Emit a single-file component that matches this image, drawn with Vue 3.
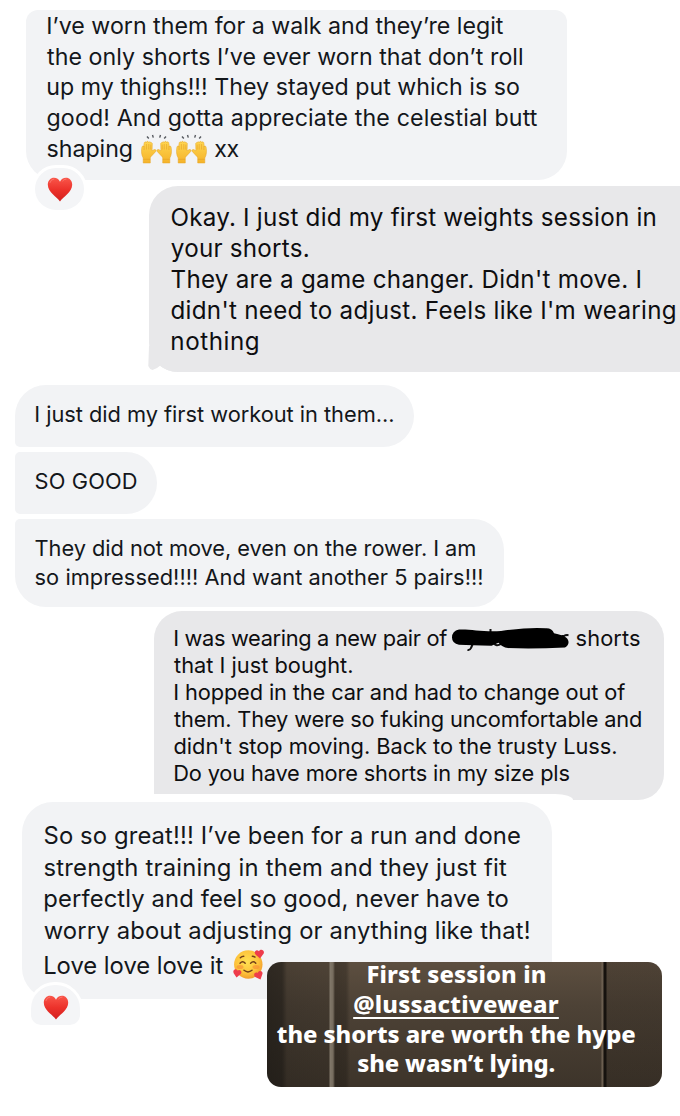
<template>
    <div class="board">
        <div v-for="message in messages" :key="message.id" class="bubble" :class="[message.tone, message.id]">
            <svg v-if="message.id === 'weights'" class="tail" viewBox="0 0 30 26">
                <path d="M1 0L.3 20q1 3 4.200 4 4-1 7.500-4.300 7 6 18 6.300V0z" />
            </svg>
            <div v-if="message.id === 'luss'" class="underlap"></div>

            <div v-for="(line, index) in message.lines" :key="index" class="line">
                <template v-for="(part, i) in line" :key="i">
                    <span v-if="part.text" class="text" :style="fit(part, message)">{{ part.text }}</span>

                    <svg v-else-if="part.icon === 'hands'" class="hands" viewBox="0 0 31 31">
                        <defs>
                            <linearGradient id="skin" x1="0" y1="0" x2="0" y2="1">
                                <stop offset="0" stop-color="#ffd650" />
                                <stop offset="1" stop-color="#f5b32a" />
                            </linearGradient>
                        </defs>
                        <path fill="none" stroke="#55585e" stroke-width="1.4" d="M6 2.500l1.800 2M11.500 1l.8 2.600M18.700 3.600l.8-2.600M23.200 4.500l1.800-2" />
                        <g v-for="side in ['left', 'right']" :key="side" :class="side">
                            <path fill="url(#skin)" stroke="#e5a427" stroke-width=".5" d="M2.200 29v-5C.5 21.500 .1 17 .9 13.200c.3-1.500 1.500-1.500 1.700-.4L3.200 9c.4-1.600 1.900-1.500 2-.2.4-1.900 2.200-1.900 2.400-.2.700-1.400 2.200-1 2.200.4.500-.6 1.600-.3 1.500.8l-.2 7 1.800-1.100c1.700-.8 2.700.6 1.900 1.700l-3.700 4c-1.100 1.200-1.800 1.700-1.800 2.800V29z" />
                            <path fill="none" stroke="#dc9622" stroke-width=".5" d="M3.100 12v4M5.400 10v5.500M7.800 10v5.500M9.800 10.500v5M2.400 25.300h6.700" />
                        </g>
                    </svg>

                    <svg v-else-if="part.icon === 'marker'" class="marker" viewBox="0 0 118 28">
                        <g fill="none" stroke="#111" stroke-width="2">
                            <path d="M23 15l-3 7q-1 2.500-3.500 2M39.500 3v8M43 17q2 4 7 1M111.500 21V9M111.500 12q1.500-3.500 6-2.800" />
                        </g>
                        <path d="M8 3.500C20 3 31 6 50 5Q78 1 95 2.300q6-.2 8 5 9 2 12 4.200c4 3 3 8-1 10q-31 1.500-57 .6-6-.8-9.500-5.300l-7 3q-20-.5-32.500-1Q1 17.500 1 11.500 1 5 8 3.500z" />
                    </svg>

                    <svg v-else class="face" viewBox="0 0 31 31">
                        <defs>
                            <radialGradient id="faceFill" cx=".45" cy=".4" r=".62">
                                <stop offset="0" stop-color="#ffe052" />
                                <stop offset=".65" stop-color="#fdc33b" />
                                <stop offset="1" stop-color="#f19a2b" />
                            </radialGradient>
                        </defs>
                        <circle cx="15.300" cy="15.500" r="14.200" fill="url(#faceFill)" />
                        <ellipse cx="7" cy="18" rx="3.500" ry="2" fill="#f68a35" opacity=".6" />
                        <ellipse cx="23" cy="18" rx="3.500" ry="2" fill="#f68a35" opacity=".6" />
                        <path fill="none" stroke="#713e19" stroke-width="1.400" stroke-linecap="round" d="M7 14.300q2.700-3 5.200 0M17.600 14.300q2.700-3 5.200 0M11 21.300q4 3.300 8 0M7.300 8.800q1.500-1.500 3.500-1.500M19.300 7.300q1.500 0 2.700.8" />
                        <path class="love" d="M27 9.500l-4.300-3.700c-2.700-3.200 1-6.300 3.300-3.500 1.700-3.100 6-1 4.700 2.200z" />
                        <path class="love" d="M3.500 28.500l-2.800-4.300c-1.600-3.800 2.400-5.500 3.800-2.600 2.500-2 5.300 1 3.200 3.500z" />
                        <path class="love" d="M27.500 30.500l-4.800-2.200c-3.300-2.400-.7-6 2-4.400 1.100-3.100 5.200-2.400 4.800.8z" />
                    </svg>
                </template>
            </div>

            <div v-if="message.loved" class="reaction">
                <svg class="heart" viewBox="0 0 26 25">
                    <defs>
                        <linearGradient id="heartFill" x1="0" y1="0" x2="0" y2="1">
                            <stop offset="0" stop-color="#f9564a" />
                            <stop offset=".5" stop-color="#ec322b" />
                            <stop offset="1" stop-color="#d3201e" />
                        </linearGradient>
                    </defs>
                    <path fill="url(#heartFill)" d="M13 24.500C10 20 1 15.500 .8 7.800.8 3.500 3.700.8 7 .8c2.700 0 4.900 1.500 6 4 1.100-2.500 3.300-4 6-4 3.300 0 6.200 2.700 6.200 7C25 15.500 16 20 13 24.500z" />
                    <path fill="none" stroke="#ff9086" stroke-width=".8" opacity=".7" d="M2.800 6Q3.800 2.300 7.200 2M15.500 4.200q1.300-2 4-2.200" />
                </svg>
            </div>
        </div>

        <div class="story">
            <div v-for="line in story.lines" :key="line.text" class="story-line">
                <span class="text" :class="{ mention: line.mention }" :style="fit(line, story)">{{ line.text }}</span>
            </div>
        </div>
    </div>
</template>

<script setup>
const messages = [
    {
        id: 'walk',
        tone: 'light',
        size: 23.2,
        loved: true,
        lines: [
            [{ text: "I’ve worn them for a walk and they’re legit", width: 456 }],
            [{ text: "the only shorts I’ve ever worn that don’t roll", width: 475 }],
            [{ text: 'up my thighs!!! They stayed put which is so', width: 472 }],
            [{ text: 'good! And gotta appreciate the celestial butt', width: 490 }],
            [{ text: 'shaping', width: 84.5 }, { icon: 'hands' }, { icon: 'hands' }, { text: 'xx', width: 24 }]
        ]
    },
    {
        id: 'weights',
        tone: 'gray',
        size: 24.2,
        lines: [
            [{ text: 'Okay. I just did my first weights session in', width: 484 }],
            [{ text: 'your shorts.', width: 137 }],
            [{ text: "They are a game changer. Didn't move. I", width: 469 }],
            [{ text: "didn't need to adjust. Feels like I'm wearing", width: 504 }],
            [{ text: 'nothing', width: 87 }]
        ]
    },
    {
        id: 'workout',
        tone: 'light',
        size: 21.8,
        lines: [[{ text: 'I just did my first workout in them...', width: 358 }]]
    },
    {
        id: 'good',
        tone: 'light',
        size: 21.8,
        lines: [[{ text: 'SO GOOD', width: 101.5 }]]
    },
    {
        id: 'rower',
        tone: 'light',
        size: 21.8,
        lines: [
            [{ text: 'They did not move, even on the rower. I am', width: 440 }],
            [{ text: 'so impressed!!!! And want another 5 pairs!!!', width: 447 }]
        ]
    },
    {
        id: 'luss',
        tone: 'gray',
        size: 21.8,
        lines: [
            [{ text: 'I was wearing a new pair of', width: 273 }, { icon: 'marker' }, { text: 'shorts', width: 63.5 }],
            [{ text: 'that I just bought.', width: 178 }],
            [{ text: 'I hopped in the car and had to change out of', width: 451 }],
            [{ text: 'them. They were so fuking uncomfortable and', width: 467 }],
            [{ text: "didn't stop moving. Back to the trusty Luss.", width: 442 }],
            [{ text: 'Do you have more shorts in my size pls', width: 395 }]
        ]
    },
    {
        id: 'great',
        tone: 'light',
        size: 23.8,
        loved: true,
        lines: [
            [{ text: 'So so great!!! I’ve been for a run and done', width: 476 }],
            [{ text: 'strength training in them and they just fit', width: 462.5 }],
            [{ text: 'perfectly and feel so good, never have to', width: 464 }],
            [{ text: 'worry about adjusting or anything like that!', width: 485 }],
            [{ text: 'Love love love it', width: 179 }, { icon: 'face' }]
        ]
    }
]

const story = {
    family: '"Noto Sans"',
    weight: 800,
    size: 23.8,
    lines: [
        { text: 'First session in', width: 177.5 },
        { text: '@lussactivewear', width: 205, mention: true },
        { text: 'the shorts are worth the hype', width: 358 },
        { text: 'she wasn’t lying.', width: 197 }
    ]
}

const context = document.createElement('canvas').getContext('2d')

function measure(text, style, scale = 1) {
    context.font = `${style.weight || 400} ${style.size * scale}px ${style.family || 'Inter'}`
    return context.measureText(text)
}

// spread the letters so the ink of a line fills its width
function fit(part, style) {
    // side bearings are read at a larger size, they get rounded at text size
    const first = measure(part.text[0], style, 20)
    const last = measure(part.text.at(-1), style, 20)
    const left = -first.actualBoundingBoxLeft / 20
    const right = (last.width - last.actualBoundingBoxRight) / 20
    // stems hang only partly over the left edge, so they line up with round letters
    const hang = left * 0.45
    const ink = measure(part.text, style).width - hang - right
    const spacing = (part.width - ink) / (part.text.length - 1)
    return {
        fontFamily: style.family || 'Inter',
        fontWeight: style.weight || 400,
        fontSize: `${style.size}px`,
        letterSpacing: `${spacing.toFixed(3)}px`,
        marginLeft: `${(-hang).toFixed(2)}px`,
        width: `${(part.width + hang).toFixed(2)}px`
    }
}
</script>

<style>
body {
    margin: 0;
    background: #fff;
}
</style>

<style scoped>
.board {
    position: relative;
    display: flex;
    flex-direction: column;
    box-sizing: border-box;
    width: 680px;
    height: 1116px;
    padding-top: 10px;
    overflow: hidden;
    background: #fff;
    font-family: Inter, "Liberation Sans", sans-serif;
}

.bubble {
    position: relative;
    flex: none;
    box-sizing: border-box;
}

.light {
    background: #f2f3f5;
    color: #14171b;
}

.gray {
    background: #e8e8ea;
    color: #0e0e10;
}

.line {
    position: relative;
    display: flex;
}

.text {
    display: block;
    flex: none;
    white-space: nowrap;
}

.walk {
    width: 541px;
    height: 170px;
    margin-left: 26px;
    padding: 1px 0 0 21px;
    border-radius: 12px 12px 29px 29px;
    line-height: 30.7px;
}

.weights {
    width: 545px;
    height: 186px;
    margin: 6px 0 0 149px;
    padding: 16px 0 0 22px;
    border-radius: 29px 14px 14px 29px;
    line-height: 31px;
}

.workout {
    width: 399px;
    height: 62px;
    margin: 13px 0 0 15px;
    padding: 15px 0 0 20px;
    border-radius: 31px 31px 31px 5px;
    line-height: 28.7px;
}

.good {
    width: 142px;
    height: 62px;
    margin: 5px 0 0 15px;
    padding: 15px 0 0 20px;
    border-radius: 5px 31px 31px 5px;
    line-height: 28.7px;
}

.rower {
    width: 489px;
    height: 88px;
    margin: 5px 0 0 15px;
    padding: 15px 0 0 20px;
    border-radius: 5px 31px 31px 31px;
    line-height: 28.7px;
}

.luss {
    width: 510px;
    height: 189px;
    margin: 4px 0 0 154px;
    padding: 14px 0 0 20px;
    border-radius: 28px 28px 26px 0;
    line-height: 27px;
}

.great {
    width: 530px;
    height: 197px;
    margin: 2px 0 0 22px;
    padding: 18px 0 0 22px;
    border-radius: 31px 31px 0 31px;
    line-height: 31.7px;
}

.great .line:nth-child(5) {
    padding-top: 3.5px;
}

.hands {
    width: 31px;
    height: 31px;
    margin: 0 -5px 0 9px;
}

.hands + .hands {
    margin-right: 8px;
}

.right {
    transform: translate(31px, 0) scaleX(-1);
}

.marker {
    width: 118px;
    height: 28px;
    margin: 1px 7px -2px 4px;
}

.face {
    width: 31px;
    height: 31px;
    margin: -1px 0 0 10px;
}

.love {
    fill: #ee3c4b;
}

.reaction {
    position: absolute;
    left: 6px;
    top: 155px;
    display: flex;
    align-items: center;
    justify-content: center;
    width: 49px;
    height: 42px;
    border: 3px solid #fff;
    border-radius: 24px;
    background: #f4f5f7;
}

.great .reaction {
    top: 180px;
    height: 36px;
    padding-top: 4px;
    border-radius: 27px 27px 13px 13px;
}

.heart {
    width: 26px;
    height: 25px;
}

.tail {
    position: absolute;
    left: -1px;
    bottom: 0;
    width: 30px;
    height: 26px;
    fill: #e8e8ea;
}

.underlap {
    position: absolute;
    left: -1px;
    bottom: 0;
    width: 420px;
    height: 6px;
    border-top-right-radius: 18px 6px;
    background: #fff;
}

.story {
    position: absolute;
    left: 267px;
    top: 962px;
    display: flex;
    flex-direction: column;
    align-items: center;
    box-sizing: border-box;
    width: 395px;
    height: 125px;
    padding-right: 17px;
    border-radius: 14px;
    overflow: hidden;
    color: #fff;
    line-height: 29.5px;
    background:
        linear-gradient(90deg, transparent 334px, #706354 335px, #675a4b 336px, #16120e 337px, #16120e 339px, rgba(35, 29, 23, 0.25) 340px),
        linear-gradient(90deg, rgba(22, 20, 17, 0.65) 0, rgba(22, 20, 17, 0.6) 15px, rgba(22, 20, 17, 0.25) 20px, rgba(22, 20, 17, 0.2) 62px, #81786a 63px, #766c5e 66px, rgba(20, 17, 13, 0.35) 68px, rgba(20, 17, 13, 0.3) 79px, transparent 83px),
        linear-gradient(180deg, #5d4f40 0, #4d4236 35%, #3d342a 100%);
}

.story-line:first-child {
    margin-bottom: 3.5px;
    line-height: 24.5px;
}

.mention {
    text-decoration: underline;
    text-decoration-thickness: 2px;
    text-underline-offset: 4px;
}
</style>
